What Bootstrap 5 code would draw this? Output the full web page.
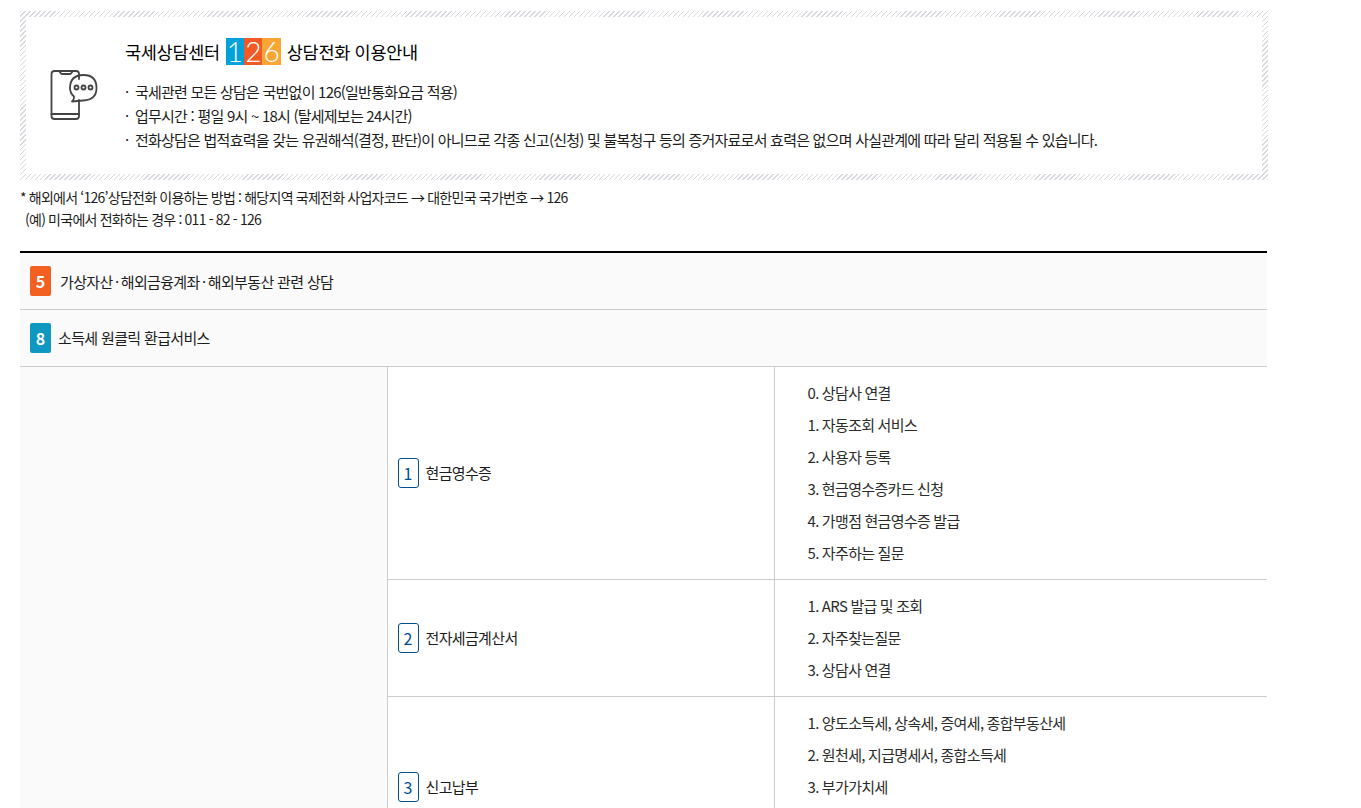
<!DOCTYPE html>
<html lang="ko">
<head>
<meta charset="utf-8">
<title>국세상담센터 126</title>
<link href="https://cdn.jsdelivr.net/npm/bootstrap@5.3.0/dist/css/bootstrap.min.css" rel="stylesheet">
<style>
html,body{overflow:hidden;height:808px}
body{font-family:"Noto Sans CJK KR","Noto Sans",sans-serif;font-size:15px;color:#1c1c1c;letter-spacing:-.65px;background:#fff}
.page-wrap{width:1247px;margin-left:20px;padding-top:11px}
.hatch-box{height:169px;width:1248px;border:6px solid transparent;background:linear-gradient(#fff,#fff) padding-box,repeating-linear-gradient(-45deg,#d8d8de 0 1px,#fff 1px 3.5px) border-box;padding:18px 0 0 24px}
.phone-ico{width:50px;height:52px;margin-top:35px;margin-right:25px;flex:none}
.info-title{font-size:17.5px;font-weight:400;color:#000;height:32px;margin:0 0 13px;letter-spacing:-.3px}
.logo126{display:inline-flex;width:55px;height:27px;margin:0 6px;color:#fff;font-family:"Lato",sans-serif;font-size:28px;font-weight:300;line-height:27px;text-align:center;letter-spacing:0}
.logo126 span{flex:1}
.lb{background:#00a2d9}.lo{background:#f15a24}.ly{background:#f9a635}
.info-list{font-size:15px;line-height:24px;color:#1c1c1c;letter-spacing:-.77px}
.info-list li::before{content:"·";display:inline-block;width:10px}
.note{font-size:14px;line-height:22px;margin:6px 0 21px;color:#1c1c1c;letter-spacing:-.74px;word-spacing:-.2px}
.note div+div{padding-left:5px}
.guide{table-layout:fixed;width:1247px;margin:0;border-top:2px solid #000}
.guide td{padding:0;border-bottom:1px solid #ccc;vertical-align:middle}
.head-row td{height:57px;background:#fafafa;padding-left:10px;color:#1c1c1c}
.cell-line{display:flex;align-items:center}
.cell-label{padding-top:2px}
.dot-sep{word-spacing:-1.25px}
.num-solid{flex:none;width:21px;height:30px;border-radius:2px;color:#fff;text-align:center;line-height:30px;font-size:16px;font-weight:700;letter-spacing:0}
.ns-o{background:#f26022;margin-right:9px}.ns-b{background:#0e97c0;margin-right:7px}
.blank-cell{background:#fafafa;border-right:1px solid #ccc}
.guide td.mid{border-right:1px solid #ccc;padding-left:10px}
.num-line{flex:none;width:21px;height:30px;border:1px solid #00508f;border-radius:3px;color:#00508f;text-align:center;line-height:28px;font-size:16px;letter-spacing:0;margin-right:7px}
.menu-list{padding:10px 0 10px 33px;margin:0;list-style:none;word-spacing:-.4px}
.menu-list li{height:32px;line-height:32px;color:#2b2b2b}
.tall-row td{height:181px;vertical-align:middle}
.tall-row td.top{vertical-align:top}
</style>
</head>
<body>
<div class="page-wrap">
  <div class="hatch-box d-flex">
    <svg class="phone-ico" viewBox="0 0 50 52" fill="none" stroke="#444" stroke-width="1.8" stroke-linecap="round" stroke-linejoin="round">
      <path d="M29 9V4Q29 1 26 1H4.500Q1.500 1 1.500 4V46Q1.500 49 4.500 49H26Q29 49 29 46V30"/>
      <path d="M1.500 44H29"/>
      <path d="M9 1l2 2.500Q11.500 4 12.500 4H19.500Q20.500 4 21 3.500L23 1"/>
      <path d="M33.500 5Q46.500 5 46.500 18Q46.500 30 33 30.500L22 31.500Q24.500 29 24 26.500Q19.800 23 20 17.500Q20.500 5 33.500 5Z"/>
      <circle cx="26.500" cy="17.500" r="2"/><circle cx="33.500" cy="17.500" r="2"/><circle cx="40.500" cy="17.500" r="2"/>
    </svg>
    <div>
      <h1 class="info-title d-flex align-items-center">국세상담센터<span class="logo126"><span class="lb">1</span><span class="lo">2</span><span class="ly">6</span></span>상담전화 이용안내</h1>
      <ul class="info-list list-unstyled mb-0">
        <li>국세관련 모든 상담은 국번없이 126(일반통화요금 적용)</li>
        <li>업무시간 : 평일 9시 ~ 18시 (탈세제보는 24시간)</li>
        <li>전화상담은 법적효력을 갖는 유권해석(결정, 판단)이 아니므로 각종 신고(신청) 및 불복청구 등의 증거자료로서 효력은 없으며 사실관계에 따라 달리 적용될 수 있습니다.</li>
      </ul>
    </div>
  </div>
  <div class="note">
    <div>* 해외에서 ‘126’상담전화 이용하는 방법 : 해당지역 국제전화 사업자코드 → 대한민국 국가번호 → 126</div>
    <div>(예) 미국에서 전화하는 경우 : 011 - 82 - 126</div>
  </div>
  <table class="guide">
    <colgroup><col style="width:367px"><col style="width:387px"><col></colgroup>
    <tbody>
      <tr class="head-row"><td colspan="3"><div class="cell-line"><span class="num-solid ns-o">5</span><span class="cell-label">가상자산<span class="dot-sep"> · </span>해외금융계좌<span class="dot-sep"> · </span>해외부동산 관련 상담</span></div></td></tr>
      <tr class="head-row"><td colspan="3"><div class="cell-line"><span class="num-solid ns-b">8</span><span class="cell-label">소득세 원클릭 환급서비스</span></div></td></tr>
      <tr>
        <td class="blank-cell" rowspan="3"></td>
        <td class="mid"><div class="cell-line"><span class="num-line">1</span><span class="cell-label">현금영수증</span></div></td>
        <td><ul class="menu-list"><li>0. 상담사 연결</li><li>1. 자동조회 서비스</li><li>2. 사용자 등록</li><li>3. 현금영수증카드 신청</li><li>4. 가맹점 현금영수증 발급</li><li>5. 자주하는 질문</li></ul></td>
      </tr>
      <tr>
        <td class="mid"><div class="cell-line"><span class="num-line">2</span><span class="cell-label">전자세금계산서</span></div></td>
        <td><ul class="menu-list"><li>1. ARS 발급 및 조회</li><li>2. 자주찾는질문</li><li>3. 상담사 연결</li></ul></td>
      </tr>
      <tr class="tall-row">
        <td class="mid"><div class="cell-line"><span class="num-line">3</span><span class="cell-label">신고납부</span></div></td>
        <td class="top"><ul class="menu-list"><li>1. 양도소득세, 상속세, 증여세, 종합부동산세</li><li>2. 원천세, 지급명세서, 종합소득세</li><li>3. 부가가치세</li></ul></td>
      </tr>
    </tbody>
  </table>
</div>
</body>
</html>
